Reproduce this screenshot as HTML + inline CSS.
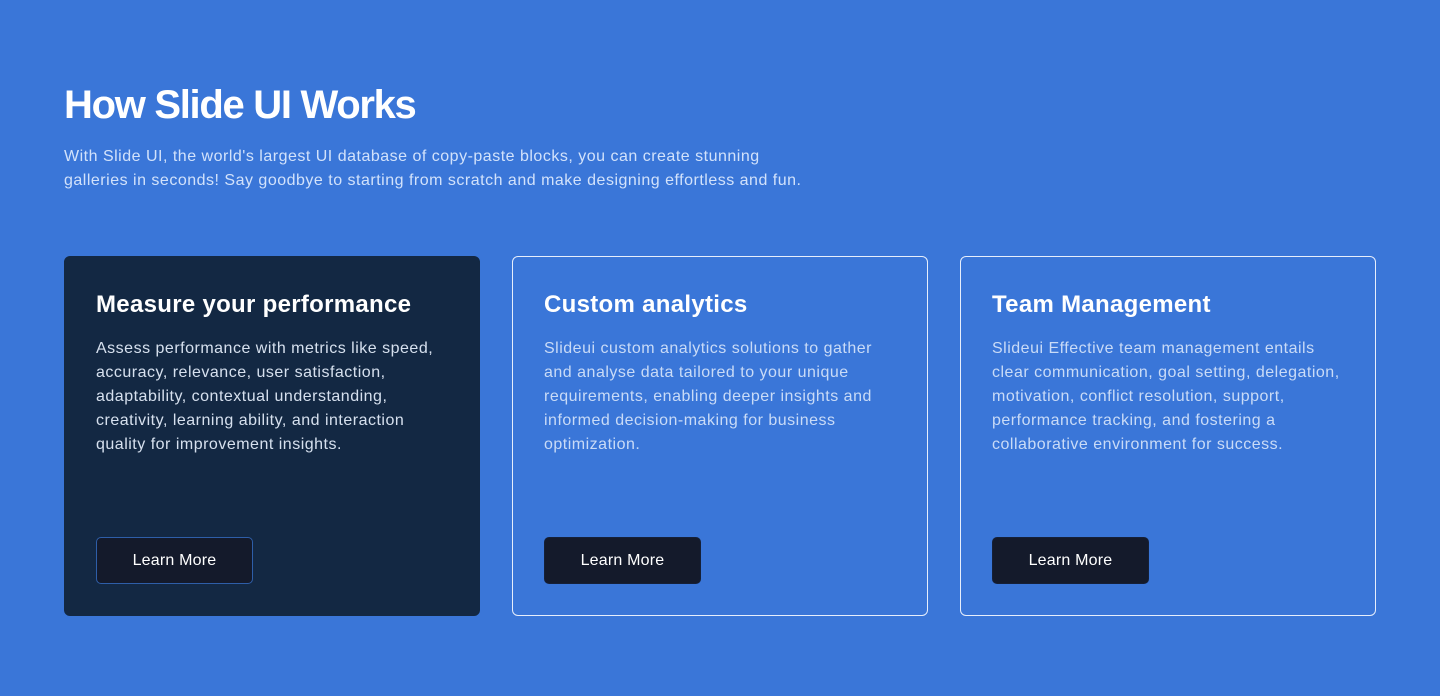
<!DOCTYPE html>
<html><head><style>
body{margin:0;width:1440px;height:696px;background:#3a76d8;font-family:"Liberation Sans",sans-serif;overflow:hidden}
h1{position:absolute;left:64px;top:80px;margin:0;font-size:40px;line-height:50px;color:#fff;font-weight:600;letter-spacing:-1.3px}
.sub{position:absolute;left:64px;top:145px;width:900px;margin:0;font-size:16px;line-height:24px;color:#d2e2fb;letter-spacing:0.5px;white-space:nowrap}
.card{position:absolute;top:256px;width:414px;height:358px;border:1px solid #e6eefc;border-radius:6px}
.card.dark{background:#132843;border-color:#132843}
.card h3{position:absolute;left:31px;top:33px;margin:0;font-size:24px;line-height:30px;color:#fff;font-weight:600;letter-spacing:0.3px;white-space:nowrap}
.card p{position:absolute;left:31px;top:80px;width:380px;margin:0;font-size:16px;line-height:24px;color:#c9dbf7;white-space:nowrap;letter-spacing:0.5px}
.card.dark p{color:#d6e0ee}
.btn{position:absolute;left:31px;top:280px;width:155px;height:45px;border:1px solid #152038;border-radius:5px;background:#141a2b;color:#fff;font-size:16px;line-height:45px;text-align:center;letter-spacing:0.2px}
.dark .btn{border-color:#2e5ea8}
</style></head><body>
<h1>How Slide UI Works</h1>
<p class="sub">With Slide UI, the world's largest UI database of copy-paste blocks, you can create stunning<br>galleries in seconds! Say goodbye to starting from scratch and make designing effortless and fun.</p>
<div class="card dark" style="left:64px"><h3>Measure your performance</h3><p>Assess performance with metrics like speed,<br>accuracy, relevance, user satisfaction,<br>adaptability, contextual understanding,<br>creativity, learning ability, and interaction<br>quality for improvement insights.</p><div class="btn">Learn More</div></div>
<div class="card" style="left:512px"><h3>Custom analytics</h3><p>Slideui custom analytics solutions to gather<br>and analyse data tailored to your unique<br>requirements, enabling deeper insights and<br>informed decision-making for business<br>optimization.</p><div class="btn">Learn More</div></div>
<div class="card" style="left:960px"><h3>Team Management</h3><p>Slideui Effective team management entails<br>clear communication, goal setting, delegation,<br>motivation, conflict resolution, support,<br>performance tracking, and fostering a<br>collaborative environment for success.</p><div class="btn">Learn More</div></div>
</body></html>
